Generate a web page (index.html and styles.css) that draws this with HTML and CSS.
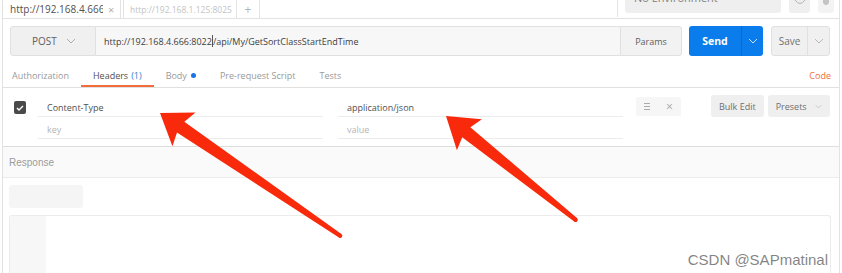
FILE: index.html
```html
<!DOCTYPE html>
<html>
<head>
<meta charset="utf-8">
<title>Postman</title>
<link rel="stylesheet" href="styles.css">
</head>
<body>
<div class="window">
  <div class="topbar">
    <div class="tab tab-active"><span class="tab-title">http://192.168.4.666</span><span class="tab-close">×</span></div>
    <div class="tab tab-other"><span class="tab-title dim">http://192.168.1.125:8025</span></div>
    <div class="tab tab-plus">+</div>
    <div class="top-spacer"></div>
    <div class="env-area">
      <div class="env-select"><span class="env-text">No Environment</span></div>
      <div class="icon-btn eye-btn"><svg width="12" height="8" viewBox="0 0 12 8"><path d="M1 0 Q6 7 11 0" fill="none" stroke="#b5b5b5" stroke-width="1"/></svg></div>
      <div class="icon-btn gear-btn"><svg width="10" height="8" viewBox="0 0 10 8"><path d="M2 0 L2 3 L4 5 L6 5 L8 3 L8 0" fill="#c4c4c4"/></svg></div>
    </div>
  </div>

  <div class="request-row">
    <div class="method">POST <svg class="chev" width="10" height="6" viewBox="0 0 10 6"><polyline points="1,1 5,5 9,1" fill="none" stroke="#b0b0b0" stroke-width="1"/></svg></div>
    <div class="url">http://192.168.4.666:8022<span class="caret"></span>/api/My/GetSortClassStartEndTime</div>
    <div class="params">Params</div>
    <div class="send"><span class="send-label">Send</span><span class="send-drop"><svg width="10" height="6" viewBox="0 0 10 6"><polyline points="1,1 5,5 9,1" fill="none" stroke="#cfe3fb" stroke-width="1"/></svg></span></div>
    <div class="save"><span class="save-label">Save</span><span class="save-drop"><svg width="10" height="6" viewBox="0 0 10 6"><polyline points="1,1 5,5 9,1" fill="none" stroke="#b8b8b8" stroke-width="1"/></svg></span></div>
  </div>

  <div class="tabs">
    <span class="rtab first">Authorization</span>
    <span class="rtab active">Headers <span class="count">(1)</span></span>
    <span class="rtab">Body <span class="dot"></span></span>
    <span class="rtab">Pre-request Script</span>
    <span class="rtab">Tests</span>
    <span class="tabs-spacer"></span>
    <span class="code">Code</span>
  </div>

  <div class="headers">
    <div class="hdr-rows">
      <div class="hdr-row">
        <div class="check-cell"><span class="checkbox"><svg width="8" height="6" viewBox="0 0 8 6"><polyline points="1,3 3,5 7,1" fill="none" stroke="#fff" stroke-width="1.4"/></svg></span></div>
        <div class="cell">Content-Type</div>
        <div class="cell">application/json</div>
        <div class="row-actions"><span class="menu-ic"><i></i><i></i><i></i></span><span class="x-ic">×</span></div>
      </div>
      <div class="hdr-row">
        <div class="check-cell"></div>
        <div class="cell placeholder">key</div>
        <div class="cell placeholder">value</div>
      </div>
    </div>
    <div class="hdr-buttons">
      <span class="btn">Bulk Edit</span>
      <span class="btn presets">Presets <svg width="12" height="7" viewBox="0 0 12 7"><polyline points="1,1 6,6 11,1" fill="none" stroke="#b0b0b0" stroke-width="1"/></svg></span>
    </div>
  </div>

  <div class="response-head">Response</div>
  <div class="response-body">
    <div class="resp-pill"></div>
    <div class="resp-editor"><div class="gutter"></div></div>
  </div>
</div>

<svg class="arrows" width="842" height="273" viewBox="0 0 842 273">
  <g transform="translate(160 113) rotate(34.27)" fill="#f92a0c">
    <polygon points="0,0 29,-20.5 25,-6.5 218,-2.2 218,2.2 25,6.5 29,20.5"/>
    <circle cx="218" cy="0" r="2.2"/>
  </g>
  <g transform="translate(446 116) rotate(38.7)" fill="#f92a0c">
    <polygon points="0,0 30,-20 26,-6.5 166,-2.2 166,2.2 26,6.5 30,20"/>
    <circle cx="166" cy="0" r="2.2"/>
  </g>
</svg>
<div class="watermark">CSDN @SAPmatinal</div>
</body>
</html>
```

FILE: styles.css
```css
* { box-sizing: border-box; margin: 0; padding: 0; }
html, body { width: 842px; height: 273px; overflow: hidden; background: #fff; }
body {
  font-family: "Open Sans", "Liberation Sans", sans-serif;
  color: #505050;
  position: relative;
}
.window {
  margin-left: 2px;
  width: 838px;
  height: 273px;
  border-left: 1px solid #e2e2e2;
  border-right: 1px solid #e2e2e2;
  display: flex;
  flex-direction: column;
}

/* top bar */
.topbar {
  height: 19px;
  flex: none;
  border-bottom: 1px solid #e3e3e3;
  display: flex;
  font-size: 10px;
}
.tab {
  display: flex;
  align-items: center;
  background: #fff;
  border-right: 1px solid #e3e3e3;
  white-space: nowrap;
  overflow: hidden;
}
.tab-active { width: 118px; padding-left: 7px; }
.tab-active .tab-title { width: 93px; flex: none; overflow: hidden; color: #505050; }
.tab-close { color: #b0b0b0; font-size: 11px; margin-left: 5px; }
.tab-other { width: 114px; margin-left: 2px; border-left: 1px solid #e3e3e3; padding-left: 6px; }
.tab-other .tab-title { width: 106px; flex: none; overflow: hidden; font-size: 8.5px; }
.dim { color: #c3c3c3; }
.tab-plus { width: 23px; justify-content: center; color: #b5b5b5; font-size: 12px; }
.top-spacer { flex: 1; }
.env-area {
  display: flex;
  align-items: flex-start;
  border-left: 1px solid #e3e3e3;
  height: 17px;
  padding-left: 7px;
  width: 222px;
}
.env-select {
  width: 156px;
  height: 13px;
  background: #efefef;
  border-radius: 0 0 3px 3px;
  overflow: hidden;
  font-size: 11px;
  padding-left: 9px;
}
.env-text { display: block; margin-top: -10px; color: #808080; }
.icon-btn {
  height: 13px;
  background: #efefef;
  border-radius: 0 0 3px 3px;
  display: flex;
  justify-content: center;
  align-items: flex-start;
}
.eye-btn { width: 21px; margin-left: 8px; }
.gear-btn { width: 16px; margin-left: 8px; background: #f3f3f3; }

/* request row */
.request-row {
  margin-top: 7px;
  padding-left: 7px;
  height: 30px;
  flex: none;
  display: flex;
}
.method {
  width: 86px;
  background: #f0f0f0;
  border: 1px solid #e0e0e0;
  border-radius: 3px 0 0 3px;
  display: flex;
  align-items: center;
  padding-left: 21px;
  font-size: 10px;
  color: #606060;
  gap: 9px;
}
.url {
  width: 524px;
  background: #f7f7f7;
  border-top: 1px solid #e0e0e0;
  border-bottom: 1px solid #e0e0e0;
  display: flex;
  align-items: center;
  padding-left: 8px;
  font-size: 9px;
  color: #404040;
  white-space: nowrap;
}
.caret { display: inline-block; width: 1px; height: 12px; background: #555; }
.params {
  width: 62px;
  background: #f2f2f2;
  border: 1px solid #e0e0e0;
  border-radius: 0 3px 3px 0;
  display: flex;
  align-items: center;
  justify-content: center;
  font-size: 9px;
  color: #606060;
}
.send {
  width: 74px;
  margin-left: 7px;
  background: #0b7ceb;
  border-radius: 3px;
  display: flex;
  color: #fff;
}
.send-label {
  flex: 1;
  display: flex;
  align-items: center;
  justify-content: center;
  font-size: 10.5px;
  font-weight: 700;
}
.send-drop {
  width: 22px;
  border-left: 1px solid #0a68c8;
  display: flex;
  align-items: center;
  justify-content: center;
}
.save {
  width: 59px;
  margin-left: 8px;
  background: #f0f0f0;
  border: 1px solid #e0e0e0;
  border-radius: 3px;
  display: flex;
  color: #707070;
}
.save-label {
  flex: 1;
  display: flex;
  align-items: center;
  justify-content: center;
  font-size: 10px;
}
.save-drop {
  width: 22px;
  border-left: 1px solid #e0e0e0;
  display: flex;
  align-items: center;
  justify-content: center;
}

/* tabs */
.tabs {
  height: 32px;
  flex: none;
  display: flex;
  align-items: flex-end;
  border-bottom: 1px solid #e0e0e0;
  font-size: 9px;
  color: #9a9a9a;
}
.rtab {
  padding: 0 12px;
  height: 18px;
  border-bottom: 2px solid transparent;
  display: flex;
  align-items: flex-start;
  white-space: nowrap;
  gap: 3px;
}
.rtab.first { padding-left: 9px; }
.rtab.active { color: #505050; border-bottom-color: #f26b3a; }
.count { color: #2f7fd3; }
.dot { width: 5px; height: 5px; border-radius: 50%; background: #1a73e8; margin-top: 4px; margin-left: 1px; }
.tabs-spacer { flex: 1; }
.code { color: #f26b3a; height: 18px; padding-right: 8px; }

/* headers */
.headers {
  flex: none;
  display: flex;
  padding: 7px 0 7px 0;
  border-bottom: 1px solid #dedede;
  font-size: 9px;
}
.hdr-rows { display: flex; flex-direction: column; }
.hdr-row { display: flex; height: 22px; }
.check-cell { width: 35px; padding: 3px 0 0 11px; display: flex; align-items: center; }
.checkbox {
  width: 12px;
  height: 13px;
  background: #4a4a4a;
  border-radius: 2px;
  display: flex;
  align-items: center;
  justify-content: center;
}
.cell {
  width: 285px;
  margin-right: 15px;
  border-bottom: 1px solid #ececec;
  display: flex;
  align-items: center;
  padding: 3px 0 0 9px;
  color: #505050;
}
.cell.placeholder { color: #b5b5b5; }
.row-actions {
  width: 45px;
  height: 19px;
  margin-top: 2px;
  margin-left: -2px;
  background: #f6f6f6;
  border-radius: 2px;
  display: flex;
  align-items: center;
  justify-content: space-around;
  color: #aaa;
}
.menu-ic { display: flex; flex-direction: column; gap: 2px; width: 6px; }
.menu-ic i { display: block; height: 1px; background: #aaa; }
.x-ic { font-size: 12px; color: #a5a5a5; }
.hdr-buttons { display: flex; margin-left: 30px; gap: 4px; }
.btn {
  height: 22px;
  background: #efefef;
  border-radius: 3px;
  display: flex;
  align-items: center;
  padding: 1px 8px 0;
  color: #707070;
  white-space: nowrap;
}
.presets { width: 62px; gap: 8px; }

/* response */
.response-head {
  height: 31px;
  flex: none;
  background: #fafafa;
  border-bottom: 1px solid #ececec;
  padding: 1px 0 0 6px;
  display: flex;
  align-items: center;
  font-family: "Liberation Sans", Arial, sans-serif;
  font-size: 10px;
  color: #9a9a9a;
}
.response-body { flex: 1; padding: 7px 0 0 6px; display: flex; flex-direction: column; }
.resp-pill { width: 74px; height: 23px; background: #f5f5f5; border-radius: 3px; }
.resp-editor {
  margin-top: 7px;
  width: 822px;
  flex: 1;
  border: 1px solid #ececec;
  border-bottom: none;
  border-radius: 3px 3px 0 0;
  display: flex;
}
.gutter { width: 36px; background: #f7f7f7; }

/* overlays */
.arrows { position: absolute; left: 0; top: 0; pointer-events: none; }
.watermark {
  position: absolute;
  right: 14px;
  top: 251px;
  font-family: "Liberation Sans", Arial, sans-serif;
  font-size: 15px;
  color: rgba(110, 110, 110, 0.85);
  white-space: nowrap;
}
```
